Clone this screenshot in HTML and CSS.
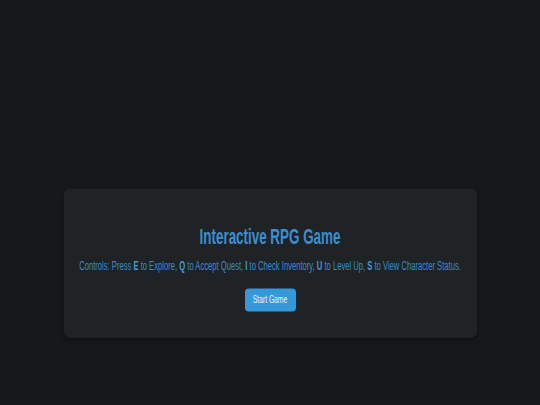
FILE: index.html
```html
<!DOCTYPE html>
<html lang="en">
<head>
<meta charset="utf-8">
<title>Interactive RPG Game</title>
<link rel="stylesheet" href="styles.css">
</head>
<body>
<div class="stage">
  <main class="card">
    <h1 class="title">Interactive RPG Game</h1>
    <p class="controls">Controls: Press <b>E</b> to Explore, <b>Q</b> to Accept Quest, <b>I</b> to Check Inventory, <b>U</b> to Level Up, <b>S</b> to View Character Status.</p>
    <button class="start" type="button">Start Game</button>
  </main>
</div>
</body>
</html>
```

FILE: styles.css
```css
html, body {
  margin: 0;
  padding: 0;
  height: 100%;
  overflow: hidden;
  background: #17181b;
}

body {
  font-family: "Liberation Sans", Arial, sans-serif;
}

/* the page is drawn with narrow type: laid out at 0.61 height, stretched back */
.stage {
  width: 540px;
  padding-top: 114.7px;
  transform: scaleY(1.639);
  transform-origin: 0 0;
  display: flex;
  justify-content: center;
}

.card {
  width: 413px;
  box-sizing: border-box;
  padding: 22px 10px 15.9px;
  background: #202326;
  border-radius: 6px / 3.7px;
  box-shadow: 0 1px 4px rgba(0, 0, 0, 0.35);
  display: flex;
  flex-direction: column;
  align-items: center;
  text-align: center;
}

.title {
  margin: 0;
  font-size: 13.42px;
  line-height: 16.1px;
  font-weight: bold;
  color: #3a8fd0;
}

.controls {
  margin: 4.9px 0 0;
  font-size: 7.63px;
  line-height: 9.15px;
  color: #3a8cc6;
  white-space: nowrap;
}

.controls b {
  font-weight: bold;
  color: #4a9ad6;
}

.start {
  margin-top: 9.2px;
  width: 51px;
  height: 14.03px;
  padding: 0;
  border: none;
  border-radius: 4px / 2.4px;
  background: #3498db;
  color: #eef6fc;
  font-family: "Liberation Sans", Arial, sans-serif;
  font-size: 6.71px;
  line-height: 7.93px;
}
```
